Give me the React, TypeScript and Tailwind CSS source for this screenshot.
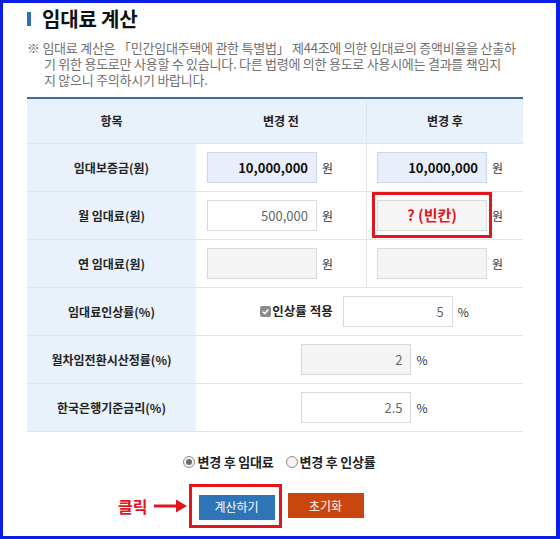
import type { ReactNode } from 'react';

type Tone = 'blue' | 'white' | 'gray';

// 금액/비율 입력칸 (읽기 전용 표시)
function Field({ value = '', tone = 'white', bold = false }: { value?: string; tone?: Tone; bold?: boolean }) {
  const toneClass =
    tone === 'blue'
      ? 'bg-[#e8effa] border-[#cdd6e4]'
      : tone === 'gray'
        ? 'bg-[#f4f4f4] border-[#dadada]'
        : 'bg-white border-[#dadada]';
  return (
    <div
      className={`flex h-[31px] w-[110px] shrink-0 items-center justify-end border pr-[8px] text-[13px] ${toneClass} ${
        bold ? 'font-bold text-[#111]' : 'text-[#666]'
      }`}
    >
      {value}
    </div>
  );
}

function Unit({ children }: { children: ReactNode }) {
  return <span className="text-[12px] text-[#333]">{children}</span>;
}

function LabelCell({ children }: { children: ReactNode }) {
  return (
    <div className="flex items-center justify-center bg-[#e9f1fb] text-[12px] font-bold text-[#222]">
      {children}
    </div>
  );
}

function SplitRow({ label, before, after }: { label: string; before: ReactNode; after: ReactNode }) {
  return (
    <div className="grid h-[48px] grid-cols-[169px_170px_157px] border-b border-[#e3e3e3]">
      <LabelCell>{label}</LabelCell>
      <div className="flex items-center gap-[5px] pl-[11px]">{before}</div>
      <div className="flex items-center gap-[5px] border-l border-[#e3e3e3] pl-[10px]">{after}</div>
    </div>
  );
}

function WideRow({ label, children }: { label: string; children: ReactNode }) {
  return (
    <div className="grid h-[48px] grid-cols-[169px_327px] border-b border-[#e3e3e3]">
      <LabelCell>{label}</LabelCell>
      <div className="flex items-center justify-center pl-[10px]">{children}</div>
    </div>
  );
}

function Radio({ checked, label }: { checked?: boolean; label: string }) {
  return (
    <label className="flex items-center gap-[2px]">
      <span className="flex h-[12px] w-[12px] items-center justify-center rounded-full border border-[#8a8a8a] bg-[#f3f3f3]">
        {checked && <span className="h-[6px] w-[6px] rounded-full bg-[#6b6b6b]" />}
      </span>
      <span className="text-[13px] font-bold tracking-[-0.2px] text-[#222]">{label}</span>
    </label>
  );
}

export default function App() {
  return (
    <div className="h-[539px] w-[560px] overflow-hidden border-b-[3px] border-l-[3px] border-r-[4px] border-t-[3px] border-[#0c1fe6] bg-white font-['Noto_Sans_CJK_KR','Noto_Sans',sans-serif]">
      {/* 제목 */}
      <div className="flex h-[32px] items-center gap-[11px] pl-[24px]">
        <span className="h-[14px] w-[4px] bg-[#2f6fb6]" />
        <h1 className="text-[20px] font-bold tracking-[-0.2px] text-[#111]">임대료 계산</h1>
      </div>

      {/* 안내 문구 */}
      <div className="mt-[5px] pl-[24px] text-[13px] leading-[16px] tracking-[-0.25px] whitespace-nowrap text-[#6f6f6f]">
        <p>※ 임대료 계산은 「민간임대주택에 관한 특별법」 제44조에 의한 임대료의 증액비율을 산출하</p>
        <p className="pl-[17px]">기 위한 용도로만 사용할 수 있습니다. 다른 법령에 의한 용도로 사용시에는 결과를 책임지</p>
        <p className="pl-[17px]">지 않으니 주의하시기 바랍니다.</p>
      </div>

      {/* 계산 표 */}
      <div className="ml-[24px] mt-[9px] w-[496px] border-t-2 border-[#3d6d9f]">
        <div className="grid h-[45px] grid-cols-[169px_170px_157px] border-b border-[#e3e3e3] bg-[#e9f1fb] text-[12px] font-bold text-[#222]">
          <div className="flex items-center justify-center">항목</div>
          <div className="flex items-center justify-center">변경 전</div>
          <div className="flex items-center justify-center border-l border-[#dfe4ea]">변경 후</div>
        </div>

        <SplitRow
          label="임대보증금(원)"
          before={
            <>
              <Field value="10,000,000" tone="blue" bold />
              <Unit>원</Unit>
            </>
          }
          after={
            <>
              <Field value="10,000,000" tone="blue" bold />
              <Unit>원</Unit>
            </>
          }
        />

        <SplitRow
          label="월 임대료(원)"
          before={
            <>
              <Field value="500,000" />
              <Unit>원</Unit>
            </>
          }
          after={
            <>
              <div className="relative">
                <div className="flex h-[31px] w-[110px] items-center justify-center border border-[#dadada] bg-[#f5f5f5] text-[15px] font-bold text-[#e3161d]">
                  ? (빈칸)
                </div>
                <span className="absolute -bottom-[7px] -left-[5px] -right-[5px] -top-[8px] border-[3px] border-[#e3161d]" />
              </div>
              <Unit>원</Unit>
            </>
          }
        />

        <SplitRow
          label="연 임대료(원)"
          before={
            <>
              <Field tone="gray" />
              <Unit>원</Unit>
            </>
          }
          after={
            <>
              <Field tone="gray" />
              <Unit>원</Unit>
            </>
          }
        />

        <WideRow label="임대료인상률(%)">
          <span className="flex h-[11px] w-[11px] items-center justify-center rounded-[2px] bg-[#8d8d8d]">
            <svg viewBox="0 0 10 10" className="h-[9px] w-[9px]">
              <path d="M2 5.2 L4.2 7.3 L8.2 2.8" fill="none" stroke="#fff" strokeWidth="1.6" />
            </svg>
          </span>
          <span className="ml-[1px] text-[12.5px] font-bold text-[#222]">인상률 적용</span>
          <div className="ml-[10px] flex items-center gap-[5px]">
            <Field value="5" />
            <Unit>%</Unit>
          </div>
        </WideRow>

        <WideRow label="월차임전환시산정률(%)">
          <div className="flex items-center gap-[5px]">
            <Field value="2" tone="gray" />
            <Unit>%</Unit>
          </div>
        </WideRow>

        <WideRow label="한국은행기준금리(%)">
          <div className="flex items-center gap-[5px]">
            <Field value="2.5" />
            <Unit>%</Unit>
          </div>
        </WideRow>
      </div>

      {/* 계산 기준 선택 */}
      <div className="mt-[22px] flex h-[16px] items-center justify-center gap-[12px]">
        <Radio checked label="변경 후 임대료" />
        <Radio label="변경 후 인상률" />
      </div>

      {/* 버튼 */}
      <div className="mt-[23px] flex justify-center gap-[13px] pl-[3px]">
        <div className="relative">
          <button className="h-[25px] w-[76px] bg-[#2e75b8] text-[12px] text-white">계산하기</button>
          <span className="pointer-events-none absolute -bottom-[8px] -left-[10px] -right-[7px] -top-[9px] border-[3px] border-[#e3161d]" />
          <div className="absolute right-full top-1/2 mr-[12px] flex -translate-y-1/2 items-center gap-[6px]">
            <span className="text-[16px] font-bold whitespace-nowrap text-[#e3161d]">클릭</span>
            <svg width="33" height="16" viewBox="0 0 33 16">
              <path d="M0 8 H24" stroke="#e3161d" strokeWidth="3" />
              <path d="M22 1.5 L33 8 L22 14.5 Z" fill="#e3161d" />
            </svg>
          </div>
        </div>
        <button className="h-[25px] w-[76px] bg-[#c9470f] text-[12px] text-white">초기화</button>
      </div>
    </div>
  );
}
